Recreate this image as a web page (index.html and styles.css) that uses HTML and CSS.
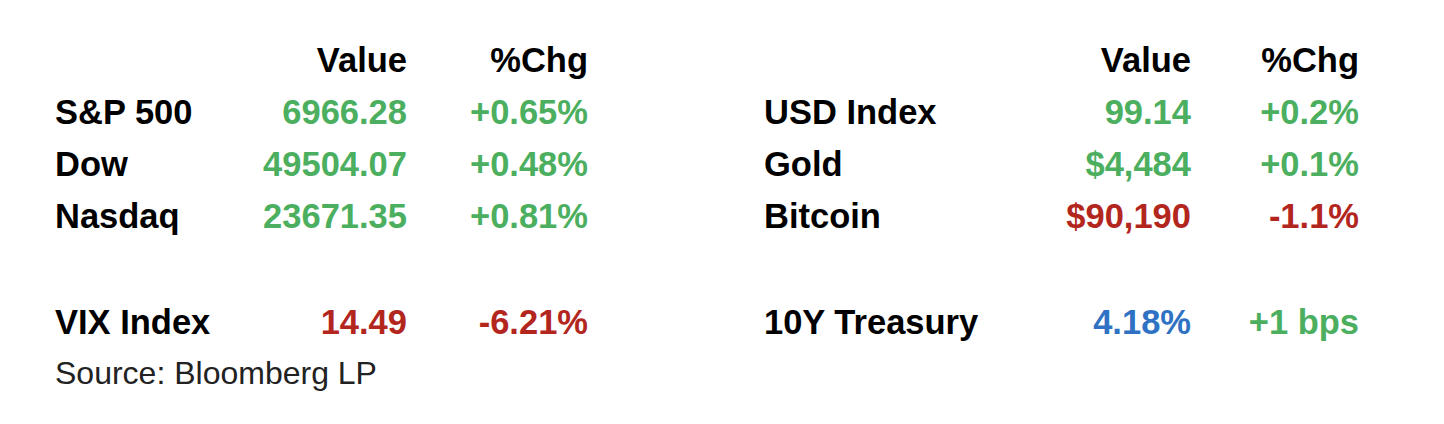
FILE: index.html
```html
<!DOCTYPE html>
<html>
<head>
<meta charset="utf-8">
<link rel="stylesheet" href="styles.css">
</head>
<body>
<div class="page">
  <div class="tables">
    <div class="grid grid-left">
      <div class="cell"></div><div class="cell num">Value</div><div class="cell num">%Chg</div>
      <div class="cell">S&amp;P 500</div><div class="cell num up">6966.28</div><div class="cell num up">+0.65%</div>
      <div class="cell">Dow</div><div class="cell num up">49504.07</div><div class="cell num up">+0.48%</div>
      <div class="cell">Nasdaq</div><div class="cell num up">23671.35</div><div class="cell num up">+0.81%</div>
      <div class="cell"></div><div class="cell"></div><div class="cell"></div>
      <div class="cell">VIX Index</div><div class="cell num down">14.49</div><div class="cell num down">-6.21%</div>
    </div>
    <div class="grid grid-right">
      <div class="cell"></div><div class="cell num">Value</div><div class="cell num">%Chg</div>
      <div class="cell">USD Index</div><div class="cell num up">99.14</div><div class="cell num up">+0.2%</div>
      <div class="cell">Gold</div><div class="cell num up">$4,484</div><div class="cell num up">+0.1%</div>
      <div class="cell">Bitcoin</div><div class="cell num down">$90,190</div><div class="cell num down">-1.1%</div>
      <div class="cell"></div><div class="cell"></div><div class="cell"></div>
      <div class="cell">10Y Treasury</div><div class="cell num blue">4.18%</div><div class="cell num up">+1 bps</div>
    </div>
  </div>
  <div class="source">Source: Bloomberg LP</div>
</div>
</body>
</html>
```

FILE: styles.css
```css
html, body {
  margin: 0;
  padding: 0;
  background: #ffffff;
}
.page {
  padding: 34px 0 0 55px;
  font-family: "Liberation Sans", Arial, Helvetica, sans-serif;
  color: #000;
}
.tables {
  display: flex;
  gap: 176px;
}
.grid {
  display: grid;
  grid-template-rows: 52px 52px 52px 52px 54px 52px;
  font-size: 34.5px;
  font-weight: 700;
  line-height: 52px;
}
.grid-left {
  grid-template-columns: 200px 152px 181px;
}
.grid-right {
  grid-template-columns: 250px 177px 168px;
}
.cell {
  white-space: nowrap;
}
.num {
  text-align: right;
}
.up { color: #4caf5f; }
.down { color: #b3261e; }
.blue { color: #2f72c4; }
.source {
  font-size: 32px;
  line-height: 50px;
  color: #222;
}
```
